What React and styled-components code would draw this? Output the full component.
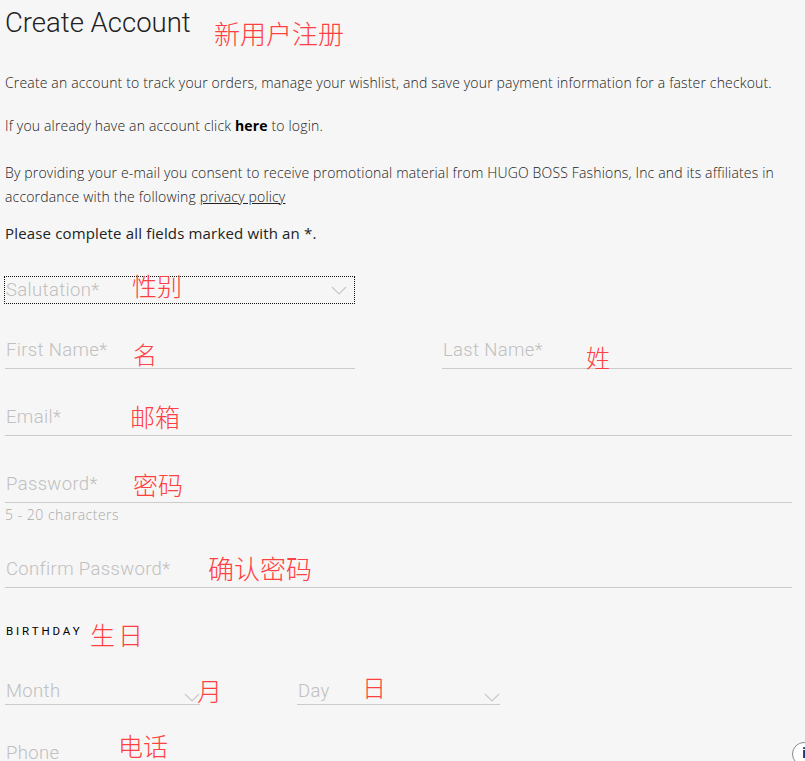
import styled, { createGlobalStyle } from 'styled-components';

const GlobalStyle = createGlobalStyle`
	html, body {
		margin: 0;
		padding: 0;
		background: #f6f6f6;
	}
	body {
		font-family: Roboto, "Liberation Sans", sans-serif;
		color: #1d1d1d;
	}
	* {
		box-sizing: border-box;
	}
`;

const Page = styled.div`
	padding: 0 13px 40px 5px;
	display: flex;
	flex-direction: column;
`;

const Header = styled.div`
	position: relative;
	padding-top: 7px;
`;

const Title = styled.h1`
	margin: 0;
	font-size: 27.5px;
	line-height: 32px;
	font-weight: 300;
	color: #222;
`;

const Text = styled.p`
	margin: ${(p) => p.$mt}px 0 0;
	font-family: "Open Sans", Roboto, sans-serif;
	font-size: ${(p) => p.$size || 14}px;
	line-height: 24px;
	font-weight: ${(p) => p.$weight || 300};
	letter-spacing: 0.16px;
	color: #222;

	& b {
		font-weight: 700;
		color: #000;
	}
	& a {
		color: inherit;
		text-decoration: underline;
	}
`;

const Note = styled.span`
	position: absolute;
	left: ${(p) => p.$left}px;
	top: ${(p) => p.$top}px;
	font-family: "Noto Sans CJK SC", sans-serif;
	font-size: ${(p) => p.$size || 25}px;
	line-height: 1;
	font-weight: 300;
	color: #ff4040;
	white-space: nowrap;
	pointer-events: none;
`;

const SelectBox = styled.div`
	position: relative;
	margin-top: 31px;
	margin-left: -1px;
	width: 351px;
	height: 28px;
	border: 1px dotted #111;
	display: flex;
	align-items: center;
	justify-content: space-between;
	padding: 0 7px 0 1px;
`;

const Placeholder = styled.span`
	font-size: 18.5px;
	font-weight: 300;
	letter-spacing: 0.35px;
	color: #c0c0c0;
	white-space: nowrap;
`;

const Row = styled.div`
	display: flex;
	gap: ${(p) => p.$gap}px;
	margin-top: ${(p) => p.$mt}px;
`;

const Field = styled.div`
	position: relative;
	width: ${(p) => (p.$width ? `${p.$width}px` : '100%')};
	height: 37px;
	border-bottom: 1px solid #cbcbcb;
	margin-top: ${(p) => p.$mt || 0}px;
	display: flex;
	align-items: ${(p) => (p.$low ? 'flex-end' : 'center')};
	justify-content: space-between;
	padding: ${(p) => (p.$low ? '0 0 2px 1px' : '0 0 0 1px')};
`;

const Hint = styled.div`
	margin-top: 3px;
	font-family: "Open Sans", Roboto, sans-serif;
	font-size: 14px;
	line-height: 18px;
	font-weight: 300;
	letter-spacing: 0.5px;
	color: #a9a9a9;
`;

const SectionLabel = styled.div`
	position: relative;
	margin-top: 36px;
	font-size: 11.5px;
	line-height: 14px;
	font-weight: 400;
	letter-spacing: 2.9px;
	color: #000;
	padding-left: 1px;
`;

const InfoBadge = styled.div`
	position: fixed;
	left: 792px;
	top: 742px;
	width: 24px;
	height: 24px;
	border-radius: 50%;
	border: 1px solid #888;
	background: #fff;
	display: flex;
	justify-content: center;
	padding-top: 2px;
	font-size: 14px;
	font-weight: 700;
	color: #1b3a6b;
`;

const Chevron = ({ color = '#c8c8c8' }) => (
	<svg width="16" height="9" viewBox="0 0 16 9">
		<polyline points="1,1 8,8 15,1" fill="none" stroke={color} strokeWidth="1.2" />
	</svg>
);

export default function App() {
	return (
		<>
			<GlobalStyle />
			<Page>
				<Header>
					<Title>Create Account</Title>
					<Note $left={209} $top={20} $size={26}>新用户注册</Note>
				</Header>

				<Text $mt={32}>
					Create an account to track your orders, manage your wishlist, and save your payment
					information for a faster checkout.
				</Text>
				<Text $mt={19}>
					If you already have an account click <b>here</b> to login.
				</Text>
				<Text $mt={23}>
					By providing your e-mail you consent to receive promotional material from HUGO BOSS
					Fashions, Inc and its affiliates in accordance with the following{' '}
					<a href="#privacy">privacy policy</a>
				</Text>
				<Text $mt={12} $size={15} $weight={400}>
					Please complete all fields marked with an *.
				</Text>

				<SelectBox>
					<Placeholder>Salutation*</Placeholder>
					<Chevron />
					<Note $left={127} $top={-4}>性别</Note>
				</SelectBox>

				<Row $gap={87} $mt={28}>
					<Field $width={350}>
						<Placeholder>First Name*</Placeholder>
						<Note $left={128} $top={10} $size={24}>名</Note>
					</Field>
					<Field $width={350}>
						<Placeholder>Last Name*</Placeholder>
						<Note $left={144} $top={13} $size={24}>姓</Note>
					</Field>
				</Row>

				<Field $mt={30}>
					<Placeholder>Email*</Placeholder>
					<Note $left={125} $top={5}>邮箱</Note>
				</Field>

				<Field $mt={30}>
					<Placeholder>Password*</Placeholder>
					<Note $left={128} $top={6}>密码</Note>
				</Field>
				<Hint>5 - 20 characters</Hint>

				<Field $mt={27}>
					<Placeholder>Confirm Password*</Placeholder>
					<Note $left={203} $top={4} $size={26}>确认密码</Note>
				</Field>

				<SectionLabel>
					BIRTHDAY
					<Note $left={85} $top={-2}>生日</Note>
				</SectionLabel>

				<Row $gap={97} $mt={30}>
					<Field $width={195} $low>
						<Placeholder>Month</Placeholder>
						<Chevron />
						<Note $left={192} $top={10}>月</Note>
					</Field>
					<Field $width={203} $low>
						<Placeholder>Day</Placeholder>
						<Chevron />
						<Note $left={65} $top={7} $size={24}>日</Note>
					</Field>
				</Row>

				<Field $mt={30}>
					<Placeholder>Phone</Placeholder>
					<Note $left={113} $top={-2}>电话</Note>
				</Field>
			</Page>
			<InfoBadge>i</InfoBadge>
		</>
	);
}
